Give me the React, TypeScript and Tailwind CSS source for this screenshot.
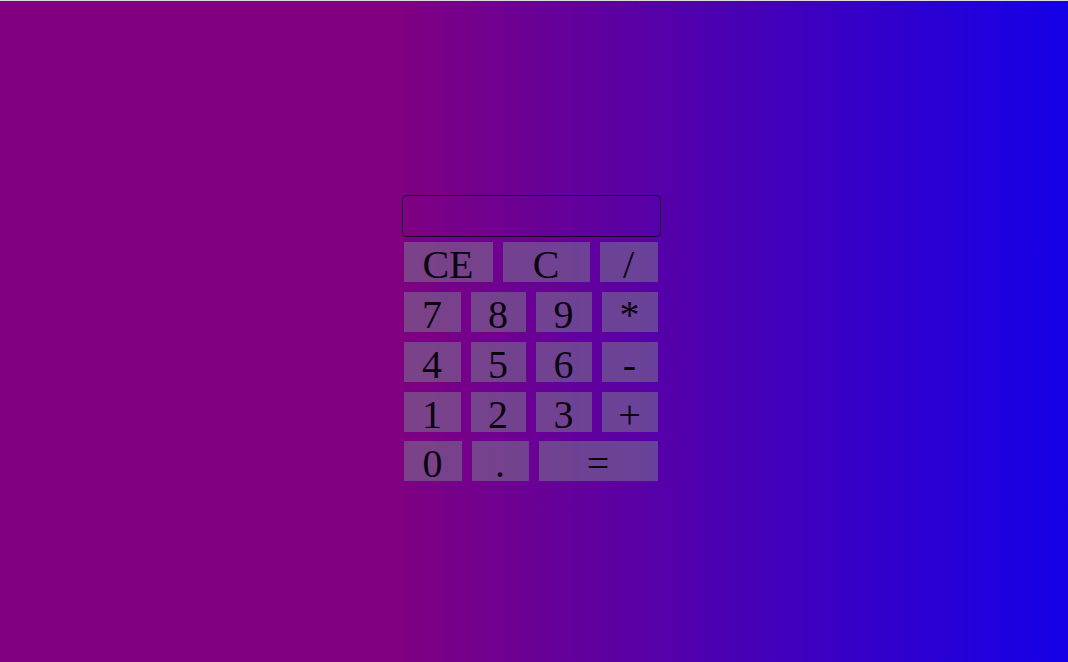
const rows: { label: string; w: string }[][] = [
  [
    { label: 'CE', w: 'w-[89px]' },
    { label: 'C', w: 'w-[87px]' },
    { label: '/', w: 'w-[58px]' },
  ],
  [
    { label: '7', w: 'w-[57px]' },
    { label: '8', w: 'w-[55px]' },
    { label: '9', w: 'w-[56px]' },
    { label: '*', w: 'w-[56px]' },
  ],
  [
    { label: '4', w: 'w-[57px]' },
    { label: '5', w: 'w-[55px]' },
    { label: '6', w: 'w-[56px]' },
    { label: '-', w: 'w-[56px]' },
  ],
  [
    { label: '1', w: 'w-[57px]' },
    { label: '2', w: 'w-[55px]' },
    { label: '3', w: 'w-[56px]' },
    { label: '+', w: 'w-[56px]' },
  ],
  [
    { label: '0', w: 'w-[58px]' },
    { label: '.', w: 'w-[57px]' },
    { label: '=', w: 'w-[119px]' },
  ],
];

const Key = ({ label, w }: { label: string; w: string }) => (
  <button
    className={`${w} h-[40px] shrink-0 flex justify-center items-start pt-[3px] overflow-visible bg-[rgba(120,120,140,0.55)] text-[#0b0510] text-[40px] leading-none`}
    style={{ fontFamily: '"Liberation Serif", "Times New Roman", serif' }}
  >
    {label}
  </button>
);

const App = () => (
  <div className="w-[1068px] h-[662px] overflow-hidden border-t border-[#dcdcdc] bg-[linear-gradient(to_right,#800080_37%,#1400e8_100%)]">
    <div className="flex justify-center pr-[6px] pt-[194px]">
      <div className="w-[259px] flex flex-col">
        <div className="h-[42px] w-[259px] rounded-[4px] border border-[#1c0030] bg-transparent" />
        <div className="mt-[5px] pl-[2px] flex flex-col gap-[10px]">
          {rows.map((row, i) => (
            <div key={i} className={`flex gap-[10px] ${i === 4 ? '-mt-[1px]' : ''}`}>
              {row.map((k) => (
                <Key key={k.label} label={k.label} w={k.w} />
              ))}
            </div>
          ))}
        </div>
      </div>
    </div>
  </div>
);

export default App;
